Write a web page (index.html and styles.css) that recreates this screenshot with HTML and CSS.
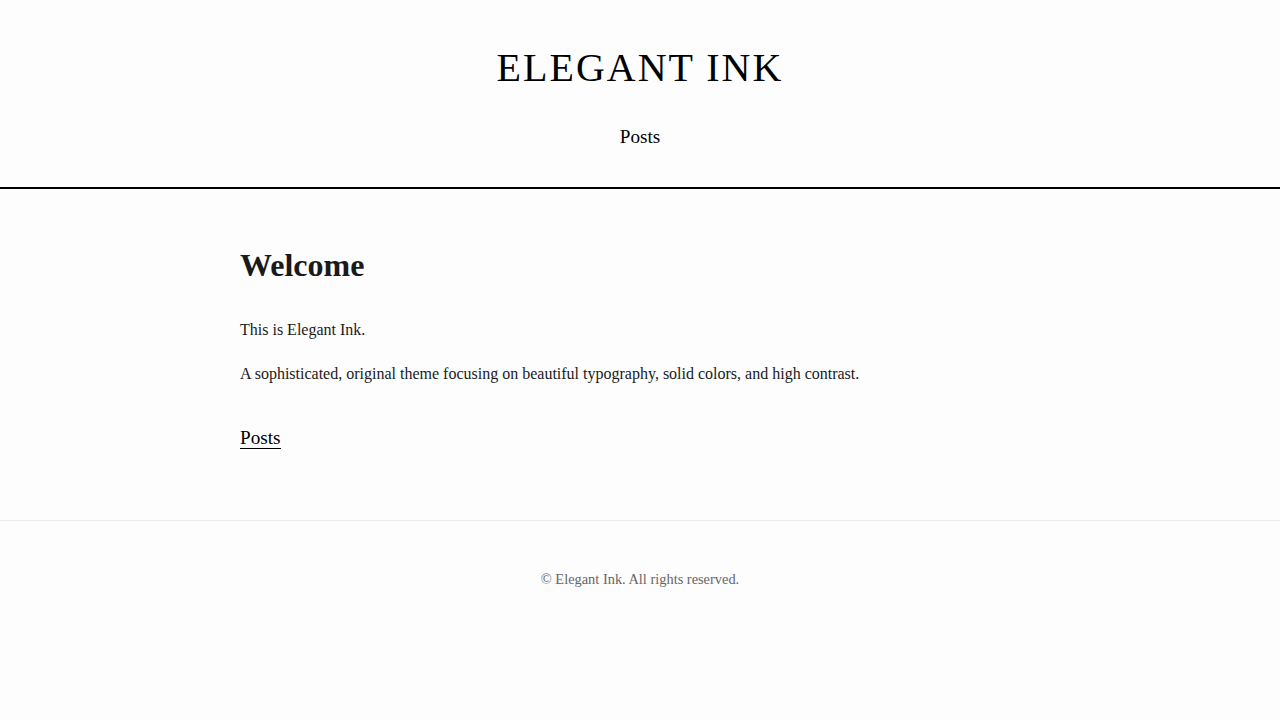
FILE: index.html
```html
<!DOCTYPE html>
<html lang="en">
<head>
<meta charset="utf-8">
<title>Elegant Ink</title>
<link rel="stylesheet" href="styles.css">
</head>
<body>
<header class="site-header">
  <h1 class="site-title">ELEGANT INK</h1>
  <nav class="site-nav"><a href="#">Posts</a></nav>
</header>
<main class="content">
  <h1 class="page-title">Welcome</h1>
  <p>This is Elegant Ink.</p>
  <p>A sophisticated, original theme focusing on beautiful typography, solid colors, and high contrast.</p>
  <div class="section-link"><a href="#">Posts</a></div>
</main>
<footer class="site-footer">
  <p>© Elegant Ink. All rights reserved.</p>
</footer>
</body>
</html>
```

FILE: styles.css
```css
html, body {
  margin: 0;
  padding: 0;
  background: #fdfdfd;
}
body {
  font-family: "Liberation Serif", "Times New Roman", serif;
  color: #1a1a1a;
  font-size: 16px;
}
.site-header {
  text-align: center;
  padding: 45px 0 39px;
  border-bottom: 2px solid #000;
}
.site-title {
  margin: 0;
  font-size: 40px;
  font-weight: normal;
  letter-spacing: 2px;
  color: #000;
  line-height: 46px;
}
.site-nav {
  margin-top: 35px;
  font-size: 19.2px;
  line-height: 22px;
}
.site-nav a {
  color: #000;
  text-decoration: none;
}
.content {
  max-width: 800px;
  margin: 0 auto;
  padding: 58px 0 68px;
}
.page-title {
  margin: 0 0 32px;
  font-size: 32px;
  line-height: 37px;
  font-weight: bold;
}
.content p {
  margin: 0 0 16px;
  line-height: 28px;
}
.section-link {
  margin-top: 36px;
  font-size: 19.2px;
  line-height: 28px;
}
.section-link a {
  color: #000;
  text-decoration: none;
  border-bottom: 1px solid #000;
}
.site-footer {
  border-top: 1px solid #eaeaea;
  text-align: center;
  padding: 49px 0 48px;
  color: #666;
  font-size: 14.4px;
}
.site-footer p {
  margin: 0;
  line-height: 18px;
}
```
